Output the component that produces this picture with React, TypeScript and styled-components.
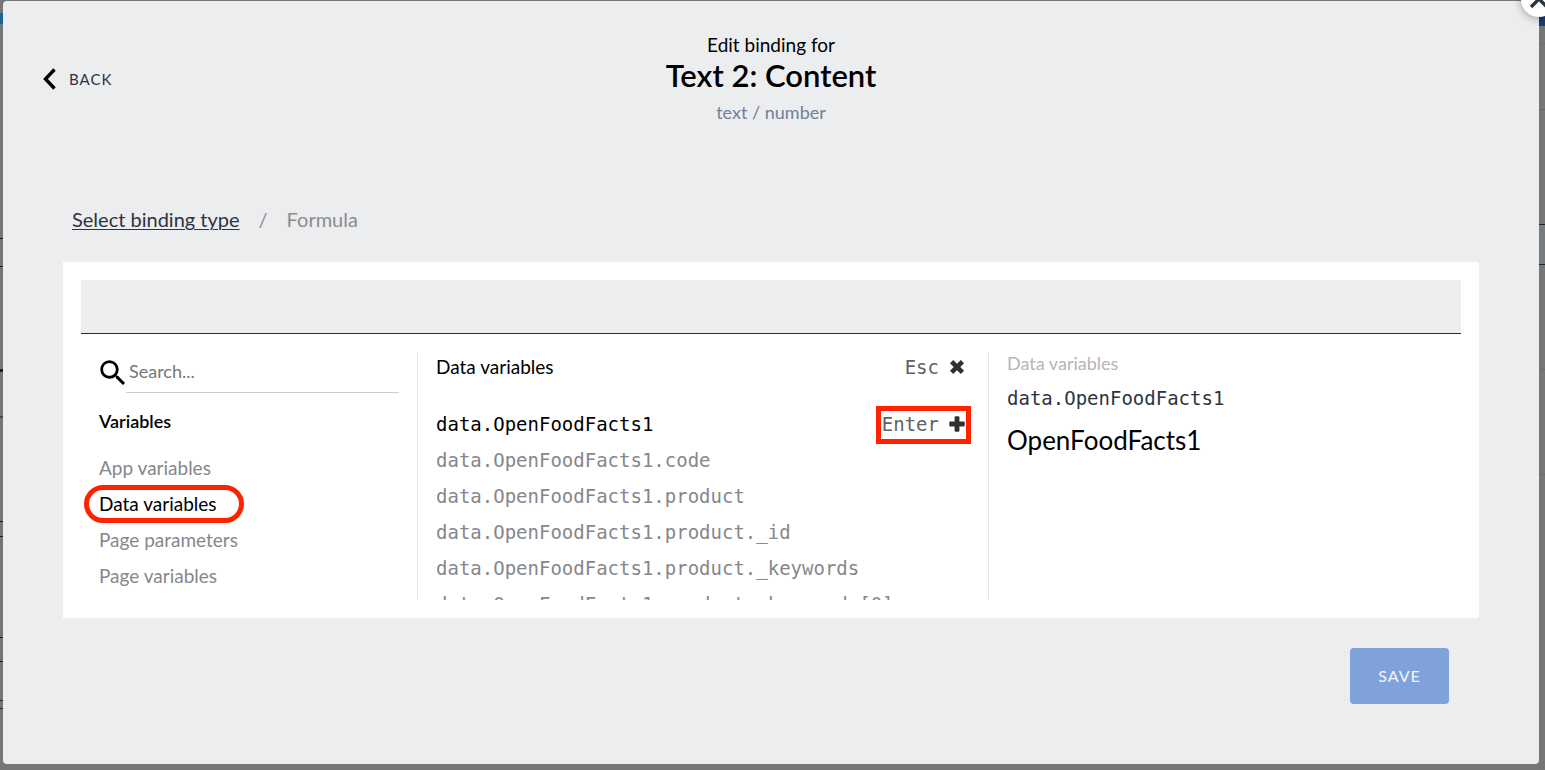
import React, { useState } from "react";
import styled, { createGlobalStyle, css } from "styled-components";
import { MdSearch } from "react-icons/md";

const sans = `Lato, "Liberation Sans", sans-serif`;
const mono = `"DejaVu Sans Mono", "Liberation Mono", monospace`;
const highlight = "#ff2200";

const GlobalStyle = createGlobalStyle`
  *, *::before, *::after { box-sizing: border-box; }
  body {
    margin: 0;
    background: #757678;
    color: #000;
    font-family: ${sans};
    font-size: 18px;
    line-height: 24px;
    overflow: hidden;
  }
  h1, h2, h3, p, ul, nav { margin: 0; padding: 0; }
  ul { list-style: none; }
  button, input { font: inherit; color: inherit; }
  button { background: none; border: 0; padding: 0; cursor: pointer; }
`;

const Page = styled.div`
  position: relative;
  min-height: 100vh;
  padding: 1px 6px 6px 3px;
  overflow: hidden;
`;

const Underlay = styled.div`
  position: absolute;
  inset: 0;
  display: flex;
  justify-content: space-between;
  overflow: hidden;
`;

const Edge = styled.div`
  display: flex;
  flex-direction: column;
  width: 6px;
  overflow: hidden;
`;

const Block = styled.div<{ $h: number; $bg?: string; $line?: string }>`
  flex: none;
  height: ${(p) => p.$h}px;
  background: ${(p) => p.$bg ?? "transparent"};
  border-bottom: ${(p) => (p.$line ? `1px solid ${p.$line}` : "0")};
`;

const Dialog = styled.section`
  position: relative;
  padding: 32px 60px 60px;
  background: #ecedef;
  border-radius: 4px;
`;

const CloseButton = styled.button`
  position: absolute;
  top: -20px;
  right: -18px;
  display: grid;
  place-items: center;
  width: 36px;
  height: 36px;
  border-radius: 50%;
  background: #fff;
  color: #2c3444;
  box-shadow: 0 2px 8px rgba(0, 0, 0, 0.3);
`;

const Header = styled.header`
  display: grid;
  grid-template-columns: 1fr auto 1fr;
  align-items: center;
  margin: 0 -20px;
`;

const BackButton = styled.button`
  display: flex;
  align-items: center;
  gap: 13px;
  justify-self: start;
  color: #2c3444;
  font-size: 15px;
  letter-spacing: 1px;
`;

const Heading = styled.div`
  text-align: center;
`;

const Lead = styled.p`
  font-size: 19px;
`;

const Title = styled.h1`
  font-size: 31px;
  line-height: 36px;
  font-weight: 600;
`;

const Kind = styled.p`
  margin-top: 7px;
  color: #71809a;
`;

const Breadcrumb = styled.nav`
  display: flex;
  gap: 19px;
  margin: 83px 9px 31px;
  color: #8a8b8e;
  font-size: 20px;

  a {
    color: #2c3444;
    text-decoration-thickness: 1px;
    text-underline-offset: 2px;
  }
`;

const Panel = styled.div`
  padding: 18px;
  background: #fff;
`;

const FormulaInput = styled.input`
  display: block;
  width: 100%;
  height: 54px;
  padding: 0 18px;
  border: 0;
  border-bottom: 1px solid #2a2d33;
  border-radius: 0;
  background: #ecedef;
  font-family: ${mono};
  outline: none;
`;

const Columns = styled.div`
  display: grid;
  grid-template-columns: 336fr 571fr 473fr;
  height: 248px;
  margin-top: 18px;
`;

const Column = styled.div`
  min-width: 0;
  height: 248px;
  padding: 0 18px;
  overflow: hidden;

  & + & {
    border-left: 1px solid #e6e7e9;
  }
`;

const SearchField = styled.label`
  display: flex;
  align-items: center;
  height: 41px;

  svg {
    flex: none;
    margin: 0 -4px 0 -3px;
  }
`;

const SearchInput = styled.input`
  flex: 1;
  min-width: 0;
  height: 41px;
  padding: 0 3px 2px;
  border: 0;
  border-bottom: 1px solid #cbcdd3;
  background: transparent;
  outline: none;

  &::placeholder {
    color: #767779;
    opacity: 1;
  }
`;

const GroupTitle = styled.h2`
  margin: 16px 0 17px;
  font-size: 18px;
  line-height: 24px;
  font-weight: 600;
`;

const itemColor = css<{ $active?: boolean }>`
  color: ${(p) => (p.$active ? "#000" : "#85878c")};
`;

const GroupItem = styled.button<{ $active?: boolean }>`
  ${itemColor}
  position: relative;
  display: block;
  height: 36px;
  font-size: 19px;
`;

const PillMark = styled.span`
  position: absolute;
  inset: -1px -27px -1px -15px;
  border: 5px solid ${highlight};
  border-radius: 19px;
  pointer-events: none;
`;

const ListHeader = styled.div`
  display: flex;
  justify-content: space-between;
  align-items: center;
  height: 30px;
  margin-bottom: 24px;
  padding-right: 5px;
`;

const ListTitle = styled.h2`
  font-size: 19px;
  font-weight: 400;
`;

const KeyButton = styled.button`
  position: relative;
  display: flex;
  align-items: center;
  gap: 10px;
  color: #616265;
  font-family: ${mono};
  font-size: 19px;
`;

const BoxMark = styled.span`
  position: absolute;
  inset: -6px -6px -8px -6px;
  border: 5px solid ${highlight};
  pointer-events: none;
`;

const Row = styled.li`
  display: flex;
  justify-content: space-between;
  align-items: center;
  height: 36px;
  padding-right: 5px;
`;

const Expression = styled.button<{ $active?: boolean }>`
  ${itemColor}
  font-family: ${mono};
  font-size: 19px;
  white-space: nowrap;
`;

const DetailKind = styled.p`
  color: #b4b5b8;
  font-size: 18px;
  line-height: 22px;
`;

const DetailExpression = styled.p`
  margin-top: 12px;
  color: #2c3444;
  font-family: ${mono};
  font-size: 19px;
`;

const DetailName = styled.h3`
  margin-top: 14px;
  font-size: 26px;
  line-height: 32px;
  font-weight: 400;
`;

const Footer = styled.footer`
  display: flex;
  justify-content: flex-end;
  padding: 30px 30px 0;
`;

const SaveButton = styled.button`
  width: 99px;
  height: 56px;
  border-radius: 4px;
  background: #7fa2dc;
  color: #f3f6fc;
  font-size: 16px;
  letter-spacing: 1px;
`;

const groups = ["App variables", "Data variables", "Page parameters", "Page variables"];

const root = "data.OpenFoodFacts1";
const expressions = [
  root,
  `${root}.code`,
  `${root}.product`,
  `${root}.product._id`,
  `${root}.product._keywords`,
  `${root}.product._keywords[0]`,
];

const ChevronIcon = () => (
  <svg width="13" height="22" viewBox="0 0 13 22" fill="none" stroke="#000" strokeWidth="3.4" aria-hidden>
    <path d="M11.5 1.5 2.5 11l9 9.5" />
  </svg>
);

const CloseIcon = () => (
  <svg width="20" height="20" viewBox="0 0 20 20" fill="none" stroke="currentColor" strokeWidth="3.4" aria-hidden>
    <path d="M2 2l16 16M18 2 2 18" />
  </svg>
);

const CrossIcon = () => (
  <svg width="16" height="16" viewBox="0 0 16 16" fill="none" stroke="#303133" strokeWidth="4.6" strokeLinejoin="round" aria-hidden>
    <path d="M2.6 2.6l10.8 10.8M13.4 2.6 2.6 13.4" />
  </svg>
);

const PlusIcon = () => (
  <svg width="16" height="16" viewBox="0 0 16 16" fill="#303133" aria-hidden>
    <rect x="5.6" y="0.3" width="4.8" height="15.4" rx="1" />
    <rect x="0.3" y="5.6" width="15.4" height="4.8" rx="1" />
  </svg>
);

export default function App() {
  const [group, setGroup] = useState("Data variables");
  const [selected, setSelected] = useState(root);
  const [formula, setFormula] = useState("");

  return (
    <>
      <GlobalStyle />
      <Page>
        <Underlay aria-hidden>
          <Edge>
            <Block $h={13} />
            <Block $h={11} $bg="#146796" />
            <Block $h={215} $line="#1b1c1f" />
            <Block $h={28} $line="#1b1c1f" />
            <Block $h={102} />
            <Block $h={3} $bg="#1b1c1f" />
            <Block $h={44} />
            <Block $h={2} $bg="#48494b" />
            <Block $h={104} $line="#1b1c1f" />
            <Block $h={15} $line="#1b1c1f" />
            <Block $h={101} $line="#1b1c1f" />
            <Block $h={24} $line="#1b1c1f" />
            <Block $h={39} $line="#2b2c2f" />
            <Block $h={8} $line="#2b2c2f" />
          </Edge>
          <Edge>
            <Block $h={26} $bg="#1f3c6e" />
            <Block $h={18} $line="#6b6c6e" />
            <Block $h={66} $line="#636466" />
            <Block $h={115} $line="#1f242e" />
            <Block $h={40} $bg="#787b80" $line="#1f242e" />
            <Block $h={105} $line="#68696b" />
            <Block $h={105} $line="#68696b" />
          </Edge>
        </Underlay>

        <Dialog role="dialog" aria-labelledby="dialog-title">
          <CloseButton aria-label="Close">
            <CloseIcon />
          </CloseButton>

          <Header>
            <BackButton>
              <ChevronIcon />
              BACK
            </BackButton>
            <Heading>
              <Lead>Edit binding for</Lead>
              <Title id="dialog-title">Text 2: Content</Title>
              <Kind>text / number</Kind>
            </Heading>
          </Header>

          <Breadcrumb aria-label="Breadcrumb">
            <a href="#binding-type">Select binding type</a>
            <span>/</span>
            <span>Formula</span>
          </Breadcrumb>

          <Panel>
            <FormulaInput
              aria-label="Formula"
              value={formula}
              onChange={(e) => setFormula(e.target.value)}
            />
            <Columns>
              <Column>
                <SearchField>
                  <MdSearch size={34} aria-hidden />
                  <SearchInput type="text" aria-label="Search" placeholder="Search..." />
                </SearchField>
                <GroupTitle>Variables</GroupTitle>
                <ul>
                  {groups.map((name) => (
                    <li key={name}>
                      <GroupItem $active={name === group} onClick={() => setGroup(name)}>
                        {name}
                        {name === group && <PillMark />}
                      </GroupItem>
                    </li>
                  ))}
                </ul>
              </Column>

              <Column>
                <ListHeader>
                  <ListTitle>{group}</ListTitle>
                  <KeyButton>
                    Esc <CrossIcon />
                  </KeyButton>
                </ListHeader>
                <ul>
                  {expressions.map((name) => (
                    <Row key={name}>
                      <Expression $active={name === selected} onClick={() => setSelected(name)}>
                        {name}
                      </Expression>
                      {name === selected && (
                        <KeyButton>
                          Enter <PlusIcon />
                          <BoxMark />
                        </KeyButton>
                      )}
                    </Row>
                  ))}
                </ul>
              </Column>

              <Column>
                <DetailKind>Data variables</DetailKind>
                <DetailExpression>{selected}</DetailExpression>
                <DetailName>OpenFoodFacts1</DetailName>
              </Column>
            </Columns>
          </Panel>

          <Footer>
            <SaveButton>SAVE</SaveButton>
          </Footer>
        </Dialog>
      </Page>
    </>
  );
}
